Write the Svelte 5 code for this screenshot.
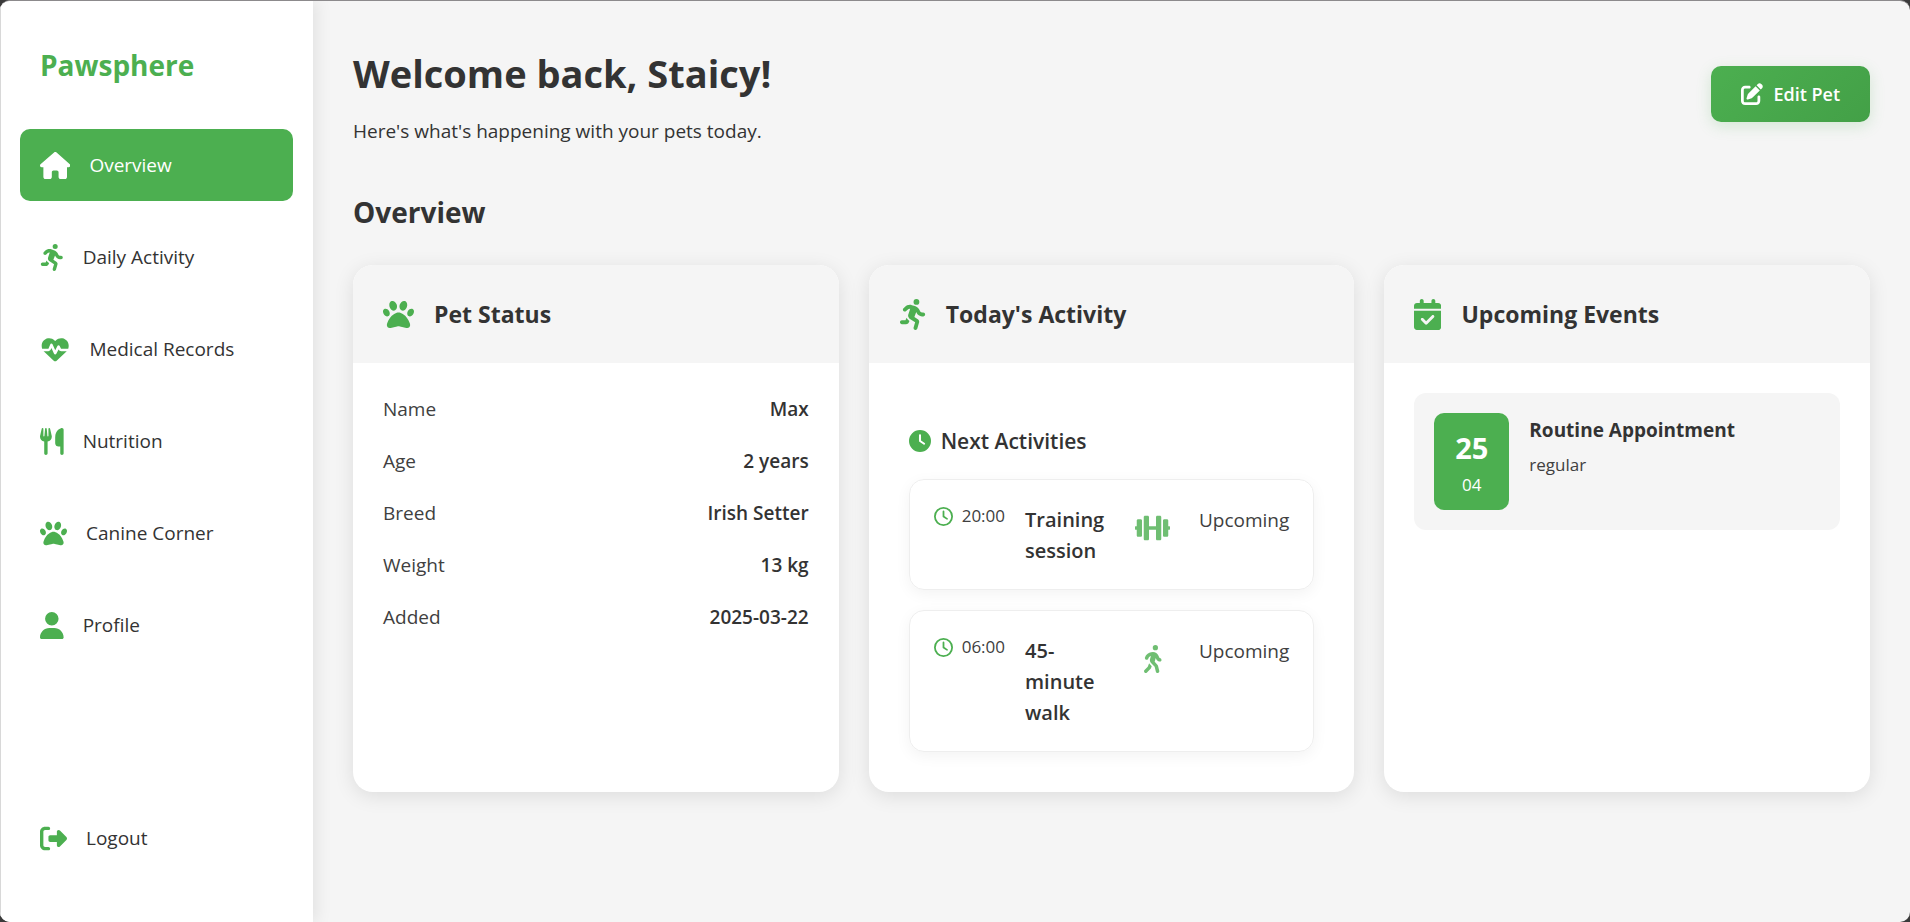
<script lang="ts">
  type Icon = { box: string; d: string };

  const icons: Record<string, Icon> = {
    house: {
      box: '0 0 576 512',
      d: 'M575.8 255.5c0 18-15 32.1-32 32.1h-32l.7 160.2c0 2.7-.2 5.4-.5 8.1V472c0 22.1-17.9 40-40 40H456c-1.1 0-2.2 0-3.3-.1c-1.4 .1-2.8 .1-4.2 .1H416 392c-22.1 0-40-17.9-40-40V448 384c0-17.7-14.3-32-32-32H256c-17.7 0-32 14.3-32 32v64 24c0 22.1-17.9 40-40 40H160 128.1c-1.5 0-3-.1-4.5-.2c-1.2 .1-2.4 .2-3.6 .2H104c-22.1 0-40-17.9-40-40V360c0-.9 0-1.9 .1-2.8V287.6H32c-18 0-32-14-32-32.1c0-9 3-17 10-24L266.4 8c7-7 15-8 22-8s15 2 21 7L564.8 231.5c8 7 12 15 11 24z'
    },
    running: {
      box: '-16 0 448 512',
      d: 'M320 48a48 48 0 1 0 -96 0 48 48 0 1 0 96 0zM125.7 175.5c9.9-9.9 23.4-15.5 37.5-15.5c1.9 0 3.8 .1 5.6 .3L137.6 254c-9.3 28 1.7 58.8 26.8 74.5l86.2 53.9-25.4 88.8c-4.9 17 5 34.7 22 39.6s34.7-5 39.6-22l28.7-100.4c5.9-20.6-2.6-42.6-20.7-53.9L238 299l30.9-82.4 5.1 12.3C289 264.7 323.9 288 362.7 288H384c17.7 0 32-14.3 32-32s-14.3-32-32-32H362.7c-12.9 0-24.6-7.8-29.5-19.7l-6.3-15c-14.6-35.1-44.1-61.9-80.5-73.1l-48.7-15c-11.1-3.4-22.7-5.2-34.4-5.2c-31 0-60.8 12.3-82.7 34.3L57.4 153.4c-12.5 12.5-12.5 32.8 0 45.3s32.8 12.5 45.3 0l23.1-23.1zM91.2 352H32c-17.7 0-32 14.3-32 32s14.3 32 32 32h69.6c19 0 36.2-11.2 43.9-28.5L157 361.6l-9.5-6c-17.5-10.9-30.5-26.8-37.9-44.9L91.2 352z'
    },
    heart: {
      box: '-32 0 576 512',
      d: 'M228.3 469.1L47.6 300.4c-4.2-3.9-8.2-8.1-11.9-12.4h87c22.6 0 43-13.6 51.7-34.5l10.5-25.2 49.3 109.5c3.8 8.5 12.1 14 21.4 14.1s17.8-5 22-13.3L320 253.7l1.7 3.4c9.5 19 28.9 31 50.1 31H476.3c-3.7 4.3-7.7 8.5-11.9 12.4L283.7 469.1c-7.5 7-17.4 10.9-27.7 10.9s-20.2-3.9-27.7-10.9zM503.7 240h-132c-3 0-5.8-1.7-7.2-4.4l-23.2-46.3c-4.1-8.1-12.4-13.3-21.5-13.3s-17.4 5.1-21.5 13.3l-41.4 82.8L205.9 158.2c-3.9-8.7-12.7-14.3-22.2-14.1s-18.1 5.9-21.8 14.8l-31.8 76.3c-1.2 3-4.2 4.9-7.4 4.9H16c-2.6 0-5 .4-7.3 1.1C3 225.2 0 208.2 0 190.9v-5.8c0-69.9 50.5-129.5 119.4-141C165 36.5 211.4 51.4 244 84l12 12 12-12c32.6-32.6 79-47.5 124.6-39.9C461.5 55.6 512 115.2 512 185.1v5.8c0 16.9-2.8 33.5-8.3 49.1z'
    },
    utensils: {
      box: '0 0 448 512',
      d: 'M416 0C400 0 288 32 288 176V288c0 35.3 28.7 64 64 64h32V480c0 17.7 14.3 32 32 32s32-14.3 32-32V352 240 32c0-17.7-14.3-32-32-32zM64 16C64 7.8 57.9 1 49.7 .1S34.2 4.6 32.4 12.5L2.1 148.8C.7 155.1 0 161.5 0 167.9c0 45.9 35.1 83.6 80 87.7V480c0 17.7 14.3 32 32 32s32-14.3 32-32V255.6c44.9-4.1 80-41.8 80-87.7c0-6.4-.7-12.8-2.1-19.1L191.6 12.5c-1.8-8-9.3-13.3-17.4-12.4S160 7.8 160 16V150.2c0 5.4-4.4 9.8-9.8 9.8c-5.1 0-9.3-3.9-9.8-9L127.9 14.6C127.2 6.3 120.3 0 112 0s-15.2 6.3-15.9 14.6L83.7 151c-.5 5.1-4.7 9-9.8 9c-5.4 0-9.8-4.4-9.8-9.8V16z'
    },
    paw: {
      box: '0 0 512 512',
      d: 'M226.5 92.9c14.3 42.9-.3 86.2-32.6 96.8s-70.1-15.6-84.4-58.5s.3-86.2 32.6-96.8s70.1 15.6 84.4 58.5zM100.4 198.6c18.9 32.4 14.3 70.1-10.2 84.1s-59.7-.9-78.5-33.3S-2.7 179.3 21.8 165.3s59.7 .9 78.5 33.3zM69.2 401.2C121.6 259.9 214.7 224 256 224s134.4 35.9 186.8 177.2c3.6 9.7 5.2 20.1 5.2 30.5v1.6c0 25.8-20.9 46.7-46.7 46.7c-11.5 0-22.9-1.4-34-4.2l-88-22c-15.3-3.8-31.3-3.8-46.6 0l-88 22c-11.1 2.8-22.5 4.2-34 4.2C84.9 480 64 459.1 64 433.3v-1.6c0-10.4 1.6-20.8 5.2-30.5zM421.8 282.7c-24.5-14-29.1-51.7-10.2-84.1s54-47.3 78.5-33.3s29.1 51.7 10.2 84.1s-54 47.3-78.5 33.3zM310.1 189.7c-32.3-10.6-46.9-53.9-32.6-96.8s52.1-69.1 84.4-58.5s46.9 53.9 32.6 96.8s-52.1 69.1-84.4 58.5z'
    },
    user: {
      box: '0 0 448 512',
      d: 'M224 256A128 128 0 1 0 224 0a128 128 0 1 0 0 256zm-45.7 48C79.8 304 0 383.8 0 482.3C0 498.7 13.3 512 29.7 512H418.3c16.4 0 29.7-13.3 29.7-29.7C448 383.8 368.2 304 269.7 304H178.3z'
    },
    logout: {
      box: '0 0 512 512',
      d: 'M377.9 105.9L500.7 228.7c7.2 7.2 11.3 17.1 11.3 27.3s-4.1 20.1-11.3 27.3L377.9 406.1c-6.4 6.4-15 9.9-24 9.9c-18.7 0-33.9-15.2-33.9-33.9l0-62.1-128 0c-17.7 0-32-14.3-32-32l0-64c0-17.7 14.3-32 32-32l128 0 0-62.1c0-18.7 15.2-33.9 33.9-33.9c9 0 17.6 3.6 24 9.9zM160 96L96 96c-17.7 0-32 14.3-32 32l0 256c0 17.7 14.3 32 32 32l64 0c17.7 0 32 14.3 32 32s-14.3 32-32 32l-64 0c-53 0-96-43-96-96L0 128C0 75 43 32 96 32l64 0c17.7 0 32 14.3 32 32s-14.3 32-32 32z'
    },
    edit: {
      box: '0 0 512 512',
      d: 'M471.6 21.7c-21.9-21.9-57.3-21.9-79.2 0L362.3 51.7l97.9 97.9 30.1-30.1c21.9-21.9 21.9-57.3 0-79.2L471.6 21.7zm-299.2 220c-6.1 6.1-10.8 13.6-13.5 21.9l-29.6 88.8c-2.9 8.6-.6 18.1 5.8 24.6s15.9 8.7 24.6 5.8l88.8-29.6c8.2-2.7 15.7-7.4 21.9-13.5L437.7 172.3 339.7 74.3 172.4 241.7zM96 64C43 64 0 107 0 160V416c0 53 43 96 96 96H352c53 0 96-43 96-96V320c0-17.7-14.3-32-32-32s-32 14.3-32 32v96c0 17.7-14.3 32-32 32H96c-17.7 0-32-14.3-32-32V160c0-17.7 14.3-32 32-32h96c17.7 0 32-14.3 32-32s-14.3-32-32-32H96z'
    },
    calendar: {
      box: '0 0 448 512',
      d: 'M128 0c17.7 0 32 14.3 32 32V64H288V32c0-17.7 14.3-32 32-32s32 14.3 32 32V64h48c26.5 0 48 21.5 48 48v48H0V112C0 85.5 21.5 64 48 64H96V32c0-17.7 14.3-32 32-32zM0 192H448V464c0 26.5-21.5 48-48 48H48c-26.5 0-48-21.5-48-48V192zM329 305c9.4-9.4 9.4-24.6 0-33.9s-24.6-9.4-33.9 0l-95 95-47-47c-9.4-9.4-24.6-9.4-33.9 0s-9.4 24.6 0 33.9l64 64c9.4 9.4 24.6 9.4 33.9 0L329 305z'
    },
    clock: {
      box: '0 0 512 512',
      d: 'M256 0a256 256 0 1 1 0 512A256 256 0 1 1 256 0zM232 120V256c0 8 4 15.5 10.7 20l96 64c11 7.4 25.9 4.4 33.3-6.7s4.4-25.9-6.7-33.3L280 243.2V120c0-13.3-10.7-24-24-24s-24 10.7-24 24z'
    },
    clockOutline: {
      box: '0 0 512 512',
      d: 'M464 256A208 208 0 1 1 48 256a208 208 0 1 1 416 0zM0 256a256 256 0 1 0 512 0A256 256 0 1 0 0 256zM232 120V256c0 8 4 15.5 10.7 20l96 64c11 7.4 25.9 4.4 33.3-6.7s4.4-25.9-6.7-33.3L280 243.2V120c0-13.3-10.7-24-24-24s-24 10.7-24 24z'
    },
    dumbbell: {
      box: '0 0 640 512',
      d: 'M104 96H56c-13.3 0-24 10.7-24 24v104H8c-4.4 0-8 3.6-8 8v48c0 4.4 3.6 8 8 8h24v104c0 13.3 10.7 24 24 24h48c13.3 0 24-10.7 24-24V120c0-13.3-10.7-24-24-24zm528 128h-24V120c0-13.3-10.7-24-24-24h-48c-13.3 0-24 10.7-24 24v272c0 13.3 10.7 24 24 24h48c13.3 0 24-10.7 24-24V288h24c4.4 0 8-3.6 8-8v-48c0-4.4-3.6-8-8-8zM456 32h-48c-13.3 0-24 10.7-24 24v168H256V56c0-13.3-10.7-24-24-24h-48c-13.3 0-24 10.7-24 24v400c0 13.3 10.7 24 24 24h48c13.3 0 24-10.7 24-24V288h128v168c0 13.3 10.7 24 24 24h48c13.3 0 24-10.7 24-24V56c0-13.3-10.7-24-24-24z'
    },
    walking: {
      box: '0 0 320 512',
      d: 'M160 48a48 48 0 1 1 96 0 48 48 0 1 1 -96 0zM126.5 199.3c-1 .4-1.9 .8-2.9 1.2l-8 3.5c-16.4 7.3-29 21.2-34.7 38.2l-2.6 7.8c-5.6 16.8-23.7 25.8-40.5 20.2s-25.8-23.7-20.2-40.5l2.6-7.8c11.4-34.1 36.6-61.9 69.4-76.5l8-3.5c20.8-9.2 43.3-14 66.1-14c44.6 0 84.8 26.8 101.9 67.9L281 232.7l21.4 10.7c15.8 7.9 22.2 27.1 14.3 42.9s-27.1 22.2-42.9 14.3L247 287.3c-10.3-5.2-18.4-13.8-22.8-24.5l-9.6-23-19.3 65.5 49.5 54c5.4 5.9 9.2 13 11.2 20.8l23 92.1c4.3 17.1-6.1 34.5-23.3 38.8s-34.5-6.1-38.8-23.3l-22-88.1-70.7-77.1c-14.8-16.1-20.3-38.6-14.7-59.7l16.9-63.5zM68.7 398l25-62.4c2.1 3 4.5 5.8 7 8.6l40.7 44.4-14.5 36.2c-2.4 6-6 11.5-10.6 16.1L54.6 502.6c-12.5 12.5-32.8 12.5-45.3 0s-12.5-32.8 0-45.3L68.7 398z'
    }
  };

  const nav = [
    { icon: 'house', label: 'Overview' },
    { icon: 'running', label: 'Daily Activity' },
    { icon: 'heart', label: 'Medical Records' },
    { icon: 'utensils', label: 'Nutrition' },
    { icon: 'paw', label: 'Canine Corner' },
    { icon: 'user', label: 'Profile' }
  ];

  const facts = [
    ['Name', 'Max'],
    ['Age', '2 years'],
    ['Breed', 'Irish Setter'],
    ['Weight', '13 kg'],
    ['Added', '2025-03-22']
  ];

  const activities = [
    { time: '20:00', title: 'Training session', icon: 'dumbbell' },
    { time: '06:00', title: '45-minute walk', icon: 'walking' }
  ];

  let current = $state('Overview');
</script>

{#snippet icon(name: string)}
  <svg class="icon" viewBox={icons[name].box} aria-hidden="true"><path d={icons[name].d} /></svg>
{/snippet}

<div class="frame">
  <div class="app">
    <aside class="sidebar">
      <div class="brand">Pawsphere</div>
      <nav aria-label="Main">
        {#each nav as item}
          <a
            href="#{item.label.toLowerCase().replace(' ', '-')}"
            class="nav-item"
            class:active={current === item.label}
            aria-current={current === item.label ? 'page' : undefined}
            onclick={() => (current = item.label)}
          >
            {@render icon(item.icon)}
            <span>{item.label}</span>
          </a>
        {/each}
      </nav>
      <button type="button" class="nav-item logout">
        {@render icon('logout')}
        <span>Logout</span>
      </button>
    </aside>

    <main>
      <header class="top">
        <div>
          <h1>Welcome back, Staicy!</h1>
          <p>Here's what's happening with your pets today.</p>
        </div>
        <button type="button" class="edit">
          {@render icon('edit')}
          <span>Edit Pet</span>
        </button>
      </header>

      <h2>Overview</h2>

      <div class="cards">
        <section class="card">
          <header class="card-head">
            {@render icon('paw')}
            <h3>Pet Status</h3>
          </header>
          <dl class="facts">
            {#each facts as [term, value]}
              <div>
                <dt>{term}</dt>
                <dd>{value}</dd>
              </div>
            {/each}
          </dl>
        </section>

        <section class="card">
          <header class="card-head">
            {@render icon('running')}
            <h3>Today's Activity</h3>
          </header>
          <div class="next">
            <h4>{@render icon('clock')}<span>Next Activities</span></h4>
            <ul>
              {#each activities as a}
                <li>
                  <span class="time">{@render icon('clockOutline')}{a.time}</span>
                  <span class="title">{a.title}</span>
                  <span class="kind">{@render icon(a.icon)}</span>
                  <span class="status">Upcoming</span>
                </li>
              {/each}
            </ul>
          </div>
        </section>

        <section class="card">
          <header class="card-head">
            {@render icon('calendar')}
            <h3>Upcoming Events</h3>
          </header>
          <div class="events">
            <article class="event">
              <div class="date">
                <strong>25</strong>
                <span>04</span>
              </div>
              <div class="event-text">
                <h4>Routine Appointment</h4>
                <p>regular</p>
              </div>
            </article>
          </div>
        </section>
      </div>
    </main>
  </div>
</div>

<style>
  :global(body) {
    margin: 0;
    background: #3a3a3a;
  }

  .frame,
  .frame * {
    box-sizing: border-box;
  }

  .frame {
    --green: #4caf50;
    --ink: #333333;
    --grey: #f5f5f5;
    min-height: 100vh;
    display: flex;
    font-family: 'Open Sans', 'Segoe UI', sans-serif;
    font-size: 19px;
    line-height: 32px;
    color: var(--ink);
  }

  h1, h2, h3, h4, p, ul, dl, dd {
    margin: 0;
    padding: 0;
  }

  button {
    font: inherit;
    border: 0;
    cursor: pointer;
  }

  .icon {
    display: block;
    flex: none;
    width: auto;
    height: 27px;
    fill: currentColor;
  }

  .app {
    flex: 1;
    display: flex;
    border-top: 1px solid #8c8a8c;
    border-radius: 10px;
    overflow: hidden;
    background: var(--grey);
  }

  .sidebar {
    flex: none;
    width: 313px;
    display: flex;
    flex-direction: column;
    padding: 40px 20px 40px 19px;
    border-left: 1px solid #d8d8d8;
    background: #ffffff;
    box-shadow: 4px 0 15px rgba(0, 0, 0, 0.08);
  }

  .brand {
    padding: 0 20px;
    margin-bottom: 40px;
    font-size: 28px;
    font-weight: 700;
    line-height: 48px;
    color: var(--green);
  }

  nav {
    display: flex;
    flex-direction: column;
    gap: 20px;
  }

  .nav-item {
    display: flex;
    align-items: center;
    gap: 19px;
    padding: 20px;
    border-radius: 10px;
    background: none;
    color: var(--ink);
    text-decoration: none;
  }

  .nav-item .icon {
    color: var(--green);
  }

  .nav-item.active {
    background: var(--green);
    color: #ffffff;
  }

  .nav-item.active .icon {
    color: #ffffff;
  }

  .logout {
    margin-top: auto;
    margin-bottom: 8px;
  }

  main {
    flex: 1;
    min-width: 0;
    padding: 40px;
  }

  .top {
    display: flex;
    align-items: center;
    justify-content: space-between;
    margin-bottom: 40px;
  }

  h1 {
    margin-bottom: 10px;
    font-size: 38px;
    line-height: 64px;
  }

  .edit {
    display: flex;
    align-items: center;
    gap: 10px;
    padding: 12px 30px;
    border-radius: 10px;
    background: linear-gradient(135deg, #4caf50, #43a047);
    box-shadow: 0 4px 15px rgba(76, 175, 80, 0.2);
    color: #ffffff;
    font-size: 18px;
    font-weight: 600;
  }

  .edit .icon {
    height: 22px;
  }

  h2 {
    margin-bottom: 28px;
    font-size: 28px;
    line-height: 50px;
  }

  .cards {
    display: grid;
    grid-template-columns: repeat(3, minmax(0, 1fr));
    gap: 30px;
  }

  .card {
    border-radius: 20px;
    overflow: hidden;
    background: #ffffff;
    box-shadow: 0 4px 20px rgba(0, 0, 0, 0.1);
  }

  .card-head {
    display: flex;
    align-items: center;
    gap: 20px;
    padding: 30px;
    background: var(--grey);
  }

  .card-head .icon {
    height: 31px;
    color: var(--green);
  }

  h3 {
    font-size: 23px;
    line-height: 38px;
  }

  .facts {
    display: flex;
    flex-direction: column;
    gap: 20px;
    padding: 30px;
  }

  .facts div {
    display: flex;
    justify-content: space-between;
  }

  dt {
    color: #404040;
  }

  dd {
    font-weight: 600;
  }

  .next {
    padding: 60px 40px 40px;
  }

  .next h4 {
    display: flex;
    align-items: center;
    gap: 10px;
    margin-bottom: 20px;
    font-size: 21px;
    font-weight: 600;
    line-height: 36px;
  }

  .next h4 .icon {
    height: 22px;
    color: var(--green);
  }

  ul {
    display: flex;
    flex-direction: column;
    gap: 20px;
    list-style: none;
  }

  li {
    display: grid;
    grid-template-columns: auto minmax(0, 1fr) 52px auto;
    gap: 20px;
    padding: 24px 24px 23px;
    border: 1px solid #eeeeee;
    border-radius: 15px;
    box-shadow: 0 4px 15px rgba(0, 0, 0, 0.05);
  }

  .time {
    display: flex;
    align-items: center;
    gap: 9px;
    height: 24px;
    font-size: 17px;
    color: #404040;
  }

  .time .icon {
    height: 19px;
    color: var(--green);
  }

  .title {
    font-size: 20px;
    font-weight: 600;
    line-height: 31px;
  }

  .kind {
    display: flex;
    justify-content: center;
    padding-top: 10px;
    color: var(--green);
    opacity: 0.8;
  }

  .kind .icon {
    height: 28px;
  }

  .status {
    color: #404040;
  }

  .events {
    padding: 30px;
  }

  .event {
    display: flex;
    gap: 20px;
    padding: 20px;
    border-radius: 12px;
    background: var(--grey);
  }

  .date {
    display: flex;
    flex-direction: column;
    align-items: center;
    gap: 2px;
    width: 75px;
    padding: 14px 15px 11px;
    border-radius: 10px;
    background: var(--green);
    color: #ffffff;
  }

  .date strong {
    font-size: 29px;
    line-height: 42px;
  }

  .date span {
    font-size: 17px;
    line-height: 28px;
  }

  .event-text {
    display: flex;
    flex-direction: column;
    gap: 3px;
    padding-top: 1px;
  }

  .event-text h4 {
    font-size: 19px;
  }

  .event-text p {
    font-size: 17px;
    color: #404040;
  }
</style>
